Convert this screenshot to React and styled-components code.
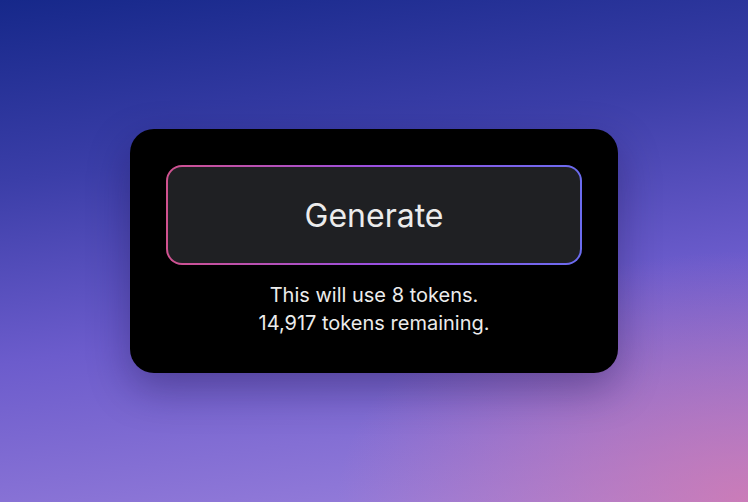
import styled, { createGlobalStyle } from "styled-components";

const GlobalStyle = createGlobalStyle`
  html, body, #root {
    margin: 0;
    height: 100%;
  }
  body {
    font-family: Inter, "Noto Sans", sans-serif;
  }
`;

const Page = styled.div`
  height: 100%;
  display: flex;
  align-items: center;
  justify-content: center;
  background:
    radial-gradient(ellipse 55% 50% at 100% 100%, rgba(218, 122, 172, 0.75), rgba(218, 122, 172, 0) 100%),
    linear-gradient(172deg, #16288a 0%, #3b3ea8 30%, #6c5ccc 60%, #9c82dc 100%);
`;

const Card = styled.div`
  width: 488px;
  box-sizing: border-box;
  padding: 36px;
  background: #000;
  border-radius: 24px;
  box-shadow: 0 16px 40px rgba(20, 10, 60, 0.35);
  display: flex;
  flex-direction: column;
  align-items: center;
  gap: 16px;
`;

const GradientButton = styled.button`
  width: 100%;
  height: 100px;
  border: 2px solid transparent;
  border-radius: 16px;
  background:
    linear-gradient(#1f2023, #1f2023) padding-box,
    linear-gradient(90deg, #d1528f 0%, #9a4fe0 50%, #6b6cf0 100%) border-box;
  color: #ececec;
  font-family: Inter, "Noto Sans", sans-serif;
  font-size: 32px;
  font-weight: 400;
  cursor: pointer;
`;

const Note = styled.p`
  margin: 0;
  color: #ececec;
  font-size: 20px;
  line-height: 28px;
  text-align: center;
`;

export default function App() {
  return (
    <>
      <GlobalStyle />
      <Page>
        <Card>
          <GradientButton>Generate</GradientButton>
          <Note>
            This will use 8 tokens.
            <br />
            14,917 tokens remaining.
          </Note>
        </Card>
      </Page>
    </>
  );
}
